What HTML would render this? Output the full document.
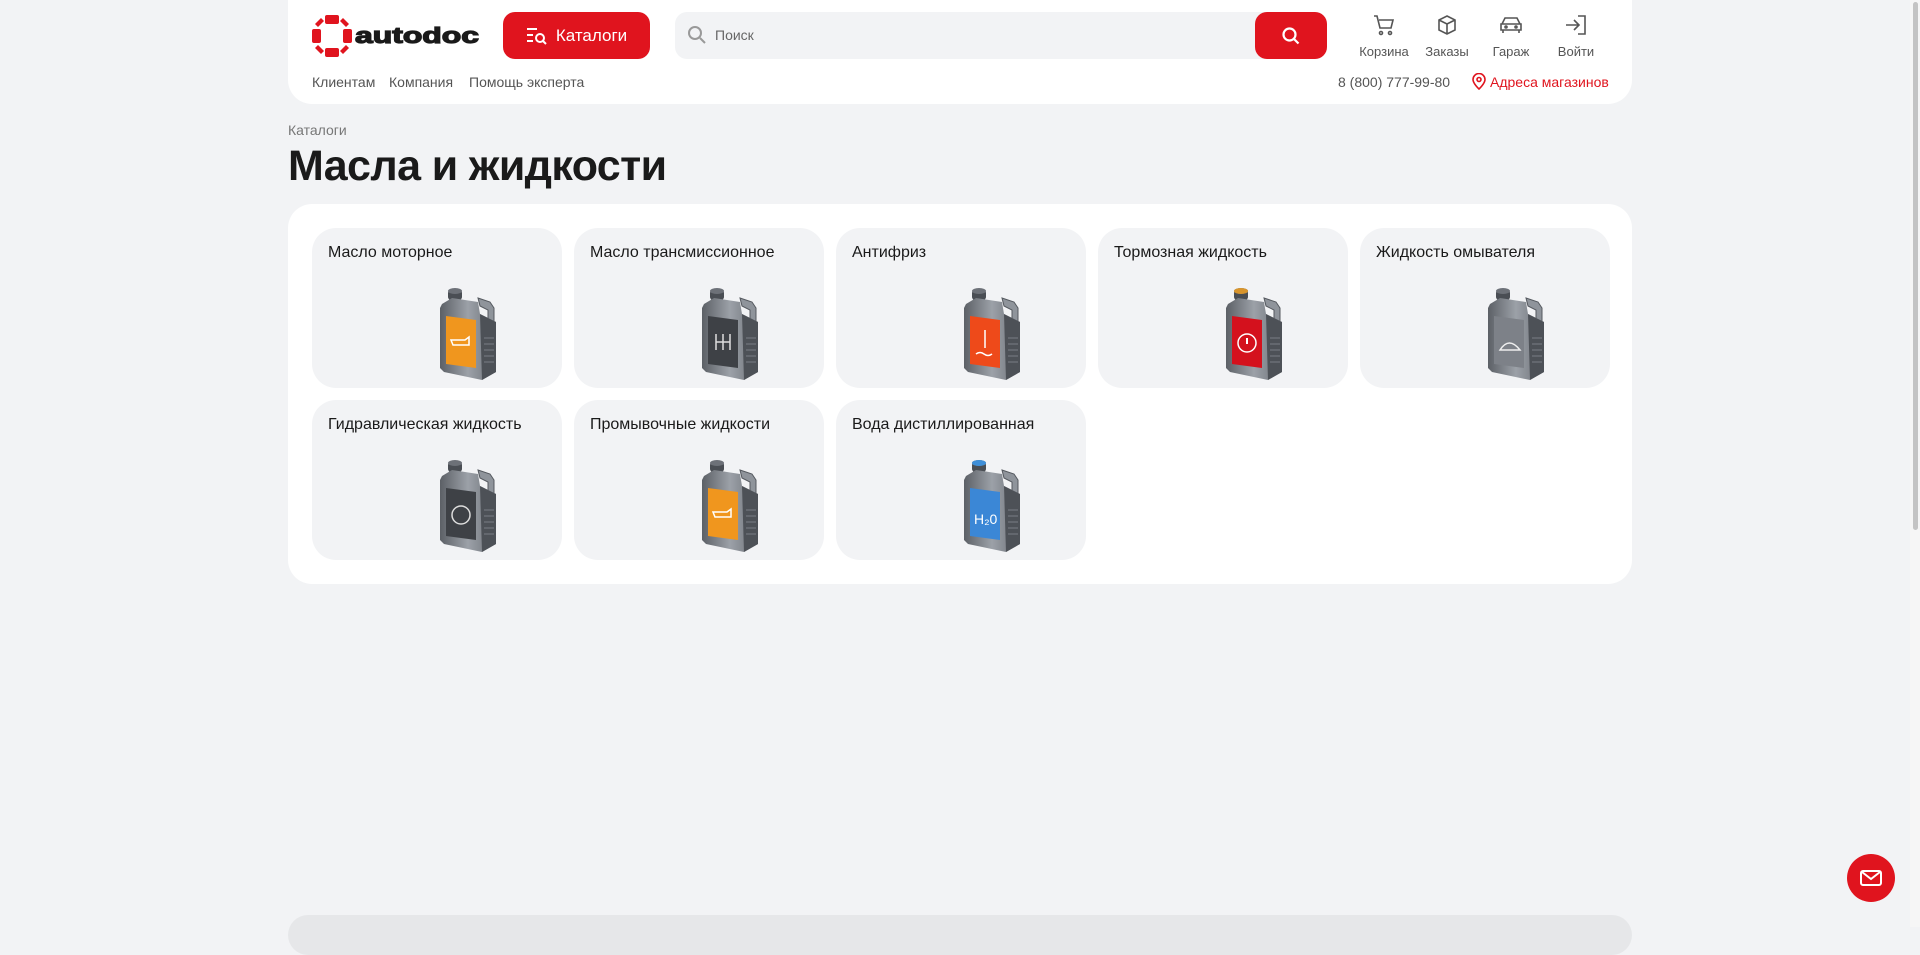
<!DOCTYPE html>
<html><head><meta charset="utf-8"><style>
*{box-sizing:border-box;margin:0;padding:0}
body{width:1920px;height:927px;overflow:hidden;background:#f2f3f5;font-family:"Liberation Sans",Arial,sans-serif;color:#1a1a1a;position:relative}
.hdr{position:absolute;left:288px;top:0;width:1344px;height:104px;background:#fff;border-radius:0 0 24px 24px}
.abs{position:absolute}
.btn{left:215px;top:12px;width:147px;height:47px;background:#e0141e;border-radius:12px;color:#fff;font-size:17px;display:flex;align-items:center;justify-content:center;gap:8px}
.search{left:387px;top:12px;width:652px;height:47px;background:#f2f3f5;border-radius:12px}
.sbtn{right:0;top:0;width:72px;height:47px;background:#e0141e;border-radius:12px;display:flex;align-items:center;justify-content:center}
.ic{width:64px;text-align:center;font-size:13px;color:#555;top:14px}
.ic svg{display:block;margin:0 auto 8px}
.lnk{top:74px;font-size:14px;color:#555}
.bc{left:288px;top:122px;font-size:14px;color:#777}
h1{position:absolute;left:288px;top:142px;font-size:43px;font-weight:700;letter-spacing:-0.6px}
.box{position:absolute;left:288px;top:204px;width:1344px;height:380px;background:#fff;border-radius:24px}
.card{position:absolute;width:250px;height:160px;background:#f2f3f5;border-radius:24px}
.card span{position:absolute;left:16px;top:16px;font-size:16px}
.card svg{position:absolute;left:126px;top:60px}
.foot{position:absolute;left:288px;top:915px;width:1344px;height:40px;background:#e6e7e9;border-radius:24px}
.mail{position:absolute;left:1847px;top:854px;width:48px;height:48px;border-radius:50%;background:#e0141e;display:flex;align-items:center;justify-content:center}
.sb{position:absolute;left:1910px;top:0;width:10px;height:927px;background:#f6f6f6}
.sb div{margin:2px auto;width:5px;height:528px;background:#c4c4c4;border-radius:3px}
</style></head><body>
<svg width="0" height="0" style="position:absolute"><defs>
<linearGradient id="gm" x1="0" x2="1"><stop offset="0" stop-color="#5c6066"/><stop offset=".5" stop-color="#9ca1a8"/><stop offset="1" stop-color="#6a6e75"/></linearGradient>
<g id="jug">
<path d="M40 10 L52 14 L56 20 L56 40 L50 40 L50 22 L42 18Z" fill="#8f949b" stroke="#55595f" stroke-width="1"/>
<rect x="10" y="2" width="14" height="10" rx="3" fill="#4a4e54"/>
<ellipse cx="17" cy="3" rx="7" ry="3" fill="#6d7178"/>
<path d="M4 16 L14 10 L40 14 L42 26 L58 34 L58 84 L44 92 L6 84 L2 80 L2 20Z" fill="url(#gm)"/>
<path d="M42 26 L58 34 L58 84 L44 92Z" fill="#4d5157"/>
<path d="M46 50h10M46 56h10M46 62h10M46 68h10M46 74h10" stroke="#6b6f76" stroke-width="1.5"/>
</g></defs></svg>

<div class="hdr">
<svg class="abs" style="left:24px;top:15px" width="172" height="42" viewBox="0 0 172 42">
<g fill="#e0141e"><rect x="13" y="0" width="14" height="9" rx="2"/><rect x="13" y="33" width="14" height="9" rx="2"/><rect x="0" y="14" width="9" height="14" rx="2"/><rect x="31" y="14" width="9" height="14" rx="2"/><path d="M3 9 L9 3 L12 6 L6 12Z"/><path d="M37 9 L31 3 L28 6 L34 12Z"/><path d="M3 33 L9 39 L12 36 L6 30Z"/><path d="M37 33 L31 39 L28 36 L34 30Z"/></g>
<text x="43" y="28" font-family="Liberation Sans" font-weight="700" font-size="22" fill="#1a1a1a" stroke="#1a1a1a" stroke-width="1.2" textLength="124" lengthAdjust="spacingAndGlyphs">autodoc</text></svg>
<div class="abs btn"><svg width="22" height="18" viewBox="0 0 22 18" fill="none" stroke="#fff" stroke-width="2"><path d="M1 2h10M1 8h6M1 14h6"/><circle cx="14" cy="11" r="4"/><path d="M17 14l3 3"/></svg>Каталоги</div>
<div class="abs search"><svg class="abs" style="left:12px;top:13px" width="20" height="20" viewBox="0 0 20 20" fill="none" stroke="#999" stroke-width="2"><circle cx="8" cy="8" r="6"/><path d="M13 13l5 5"/></svg><span class="abs" style="left:40px;top:15px;font-size:14px;color:#666">Поиск</span>
<div class="abs sbtn"><svg width="20" height="20" viewBox="0 0 20 20" fill="none" stroke="#fff" stroke-width="2.2"><circle cx="8.5" cy="8.5" r="6"/><path d="M13 13l4.5 4.5"/></svg></div></div>
<div class="abs ic" style="left:1064px"><svg width="24" height="22" viewBox="0 0 24 22" fill="none" stroke="#555" stroke-width="1.6"><path d="M2 2h3l3 12h11l2-8H7"/><circle cx="9" cy="19" r="1.5"/><circle cx="18" cy="19" r="1.5"/></svg>Корзина</div>
<div class="abs ic" style="left:1127px"><svg width="22" height="22" viewBox="0 0 22 22" fill="none" stroke="#555" stroke-width="1.6"><path d="M11 2l8 4v10l-8 4-8-4V6z M3 6l8 4 8-4 M11 10v10"/></svg>Заказы</div>
<div class="abs ic" style="left:1191px"><svg width="26" height="22" viewBox="0 0 26 22" fill="none" stroke="#555" stroke-width="1.6"><path d="M4 10l3-6h12l3 6M3 10h20v6H3zM5 16v3M21 16v3"/><circle cx="8" cy="13" r="1"/><circle cx="18" cy="13" r="1"/></svg>Гараж</div>
<div class="abs ic" style="left:1256px"><svg width="24" height="22" viewBox="0 0 24 22" fill="none" stroke="#555" stroke-width="1.6"><path d="M14 2h7v18h-7M2 11h13M10 6l5 5-5 5"/></svg>Войти</div>
<div class="abs lnk" style="left:24px">Клиентам</div>
<div class="abs lnk" style="left:101px">Компания</div>
<div class="abs lnk" style="left:181px">Помощь эксперта</div>
<div class="abs lnk" style="left:1050px">8 (800) 777-99-80</div>
<svg class="abs" style="left:1184px;top:73px" width="14" height="17" viewBox="0 0 14 17" fill="none" stroke="#e0141e" stroke-width="1.6"><path d="M7 16s6-5.5 6-9.5A6 6 0 0 0 1 6.5C1 10.5 7 16 7 16z"/><circle cx="7" cy="6.5" r="2"/></svg>
<div class="abs lnk" style="left:1202px;color:#e0141e">Адреса магазинов</div>
</div>
<div class="abs bc">Каталоги</div>
<h1>Масла и жидкости</h1>
<div class="box">
<div class="card" style="left:24px;top:24px"><span>Масло моторное</span><svg width="62" height="92" viewBox="0 0 62 92"><use href="#jug"/><path d="M8 28 L38 32 L38 80 L8 76Z" fill="#f0961e"/><path d="M13 52h14l4-3v8H15z" fill="none" stroke="#fff" stroke-width="1.5"/></svg></div>
<div class="card" style="left:286px;top:24px"><span>Масло трансмиссионное</span><svg width="62" height="92" viewBox="0 0 62 92"><use href="#jug"/><path d="M8 28 L38 32 L38 80 L8 76Z" fill="#3e4146"/><path d="M16 46v16M30 46v16M16 54h14M23 46v16" stroke="#ddd" stroke-width="1.5"/></svg></div>
<div class="card" style="left:548px;top:24px"><span>Антифриз</span><svg width="62" height="92" viewBox="0 0 62 92"><use href="#jug"/><path d="M8 28 L38 32 L38 80 L8 76Z" fill="#ee4a1a"/><path d="M23 42v18M14 66q4-3 8 0t8 0" stroke="#fff" stroke-width="1.5" fill="none"/></svg></div>
<div class="card" style="left:810px;top:24px"><span>Тормозная жидкость</span><svg width="62" height="92" viewBox="0 0 62 92"><use href="#jug"/><ellipse cx="17" cy="3" rx="7" ry="3" fill="#d9952c"/><path d="M8 28 L38 32 L38 80 L8 76Z" fill="#d4111d"/><circle cx="23" cy="55" r="9" fill="none" stroke="#fff" stroke-width="1.5"/><path d="M23 50v6" stroke="#fff" stroke-width="2"/></svg></div>
<div class="card" style="left:1072px;top:24px"><span>Жидкость омывателя</span><svg width="62" height="92" viewBox="0 0 62 92"><use href="#jug"/><path d="M8 28 L38 32 L38 80 L8 76Z" fill="#7d8188"/><path d="M14 62q9-14 20 0z" fill="none" stroke="#eee" stroke-width="1.5"/></svg></div>
<div class="card" style="left:24px;top:196px"><span>Гидравлическая жидкость</span><svg width="62" height="92" viewBox="0 0 62 92"><use href="#jug"/><path d="M8 28 L38 32 L38 80 L8 76Z" fill="#3e4146"/><circle cx="23" cy="55" r="9" fill="none" stroke="#ddd" stroke-width="1.5"/></svg></div>
<div class="card" style="left:286px;top:196px"><span>Промывочные жидкости</span><svg width="62" height="92" viewBox="0 0 62 92"><use href="#jug"/><path d="M8 28 L38 32 L38 80 L8 76Z" fill="#f0961e"/><path d="M13 52h14l4-3v8H15z" fill="none" stroke="#fff" stroke-width="1.5"/></svg></div>
<div class="card" style="left:548px;top:196px"><span>Вода дистиллированная</span><svg width="62" height="92" viewBox="0 0 62 92"><use href="#jug"/><ellipse cx="17" cy="3" rx="7" ry="3" fill="#3f8fd8"/><path d="M8 28 L38 32 L38 80 L8 76Z" fill="#3b87d6"/><text x="12" y="64" font-family="Liberation Sans" font-size="14" fill="#fff">H₂0</text></svg></div>
</div>
<div class="foot"></div>
<div class="mail"><svg width="22" height="16" viewBox="0 0 22 16" fill="none" stroke="#fff" stroke-width="2"><rect x="1" y="1" width="20" height="14" rx="2"/><path d="M2 2l9 7 9-7"/></svg></div>
<div class="sb"><div></div></div>
</body></html>
